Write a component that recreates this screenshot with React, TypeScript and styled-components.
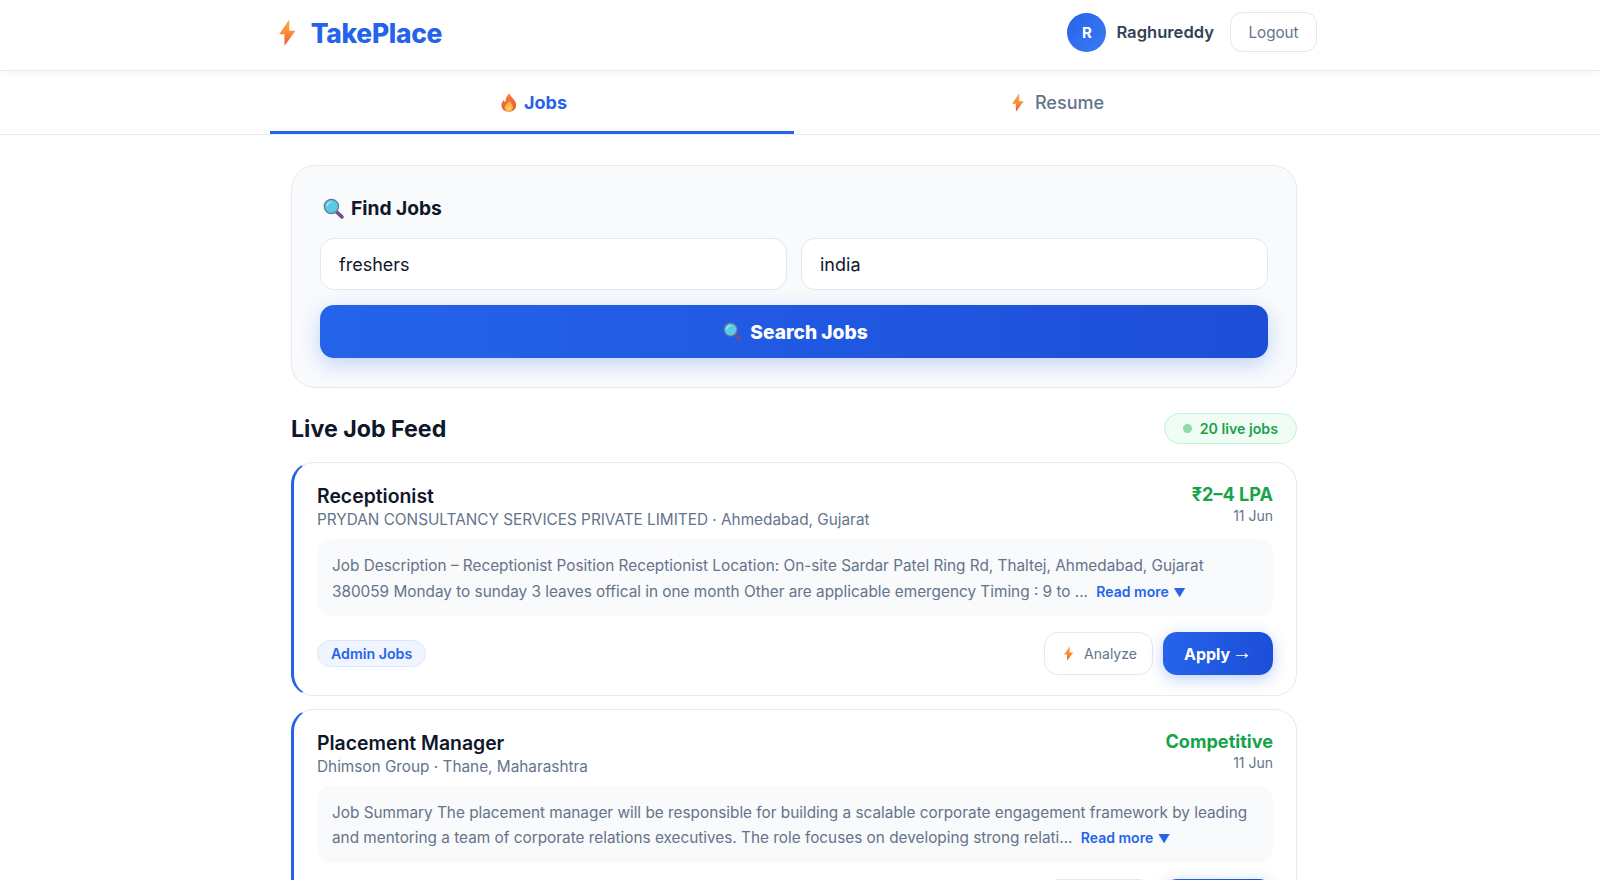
import React from 'react'
import styled, { createGlobalStyle } from 'styled-components'

const GlobalStyle = createGlobalStyle`
  html, body {
    margin: 0;
    height: 880px;
    overflow: hidden;
    background: #ffffff;
  }
  * {
    box-sizing: border-box;
  }
`

// the reference keeps 12px free on the right for its scrollbar
const Page = styled.div`
  width: 1600px;
  font-family: 'Inter', 'Liberation Sans', sans-serif;
  color: #0f172a;
`

const NavBar = styled.header`
  height: 71px;
  padding-right: 12px;
  border-bottom: 1px solid #e6ecf4;
  box-shadow: 0 2px 8px rgba(15, 23, 42, 0.05);
  & .inner {
    width: 1048px;
    height: 100%;
    margin: 0 auto;
    padding: 0 1px 5px 9px;
    display: flex;
    align-items: center;
    justify-content: space-between;
  }
`

const Logo = styled.div`
  display: flex;
  align-items: center;
  gap: 15px;
  font-size: 26.4px;
  font-weight: 800;
  letter-spacing: -0.3px;
  color: #2563eb;
`

const UserBox = styled.div`
  display: flex;
  align-items: center;
  margin-top: -1px;
  & .avatar {
    width: 39px;
    height: 39px;
    border-radius: 50%;
    background: linear-gradient(135deg, #2563eb, #3b7bf0);
    color: #fff;
    font-size: 15px;
    font-weight: 700;
    display: flex;
    align-items: center;
    justify-content: center;
  }
  & .name {
    margin-left: 10px;
    font-size: 16.6px;
    font-weight: 600;
    color: #334155;
  }
`

const LogoutButton = styled.button`
  margin-left: 16px;
  width: 87px;
  height: 40px;
  background: #fff;
  border: 1px solid #e2e8f0;
  border-radius: 12px;
  font-family: inherit;
  font-size: 15.2px;
  font-weight: 400;
  color: #64748b;
`

const TabBar = styled.nav`
  height: 64px;
  padding-right: 12px;
  border-bottom: 1px solid #e6ecf4;
  & .inner {
    width: 1048px;
    height: 63px;
    margin: 0 auto;
    display: flex;
  }
`

const Tab = styled.div<{ $active?: boolean }>`
  flex: 1;
  height: 63px;
  padding-top: 3px;
  display: flex;
  align-items: center;
  justify-content: center;
  gap: 7px;
  font-size: 18px;
  font-weight: ${(p) => (p.$active ? 700 : 500)};
  color: ${(p) => (p.$active ? '#2563eb' : '#64748b')};
  border-bottom: 3px solid ${(p) => (p.$active ? '#2563eb' : 'transparent')};
`

const EmojiSlot = styled.span<{ $width: number; $pushRight?: number }>`
  width: ${(p) => p.$width}px;
  padding-left: ${(p) => p.$pushRight ?? 0}px;
  display: flex;
  align-items: center;
  justify-content: center;
  flex-shrink: 0;
`

const Main = styled.main`
  width: 1006px;
  margin: 0 auto;
  padding-top: 30px;
  position: relative;
  left: -6px;
`

const SearchPanel = styled.section`
  height: 223px;
  padding: 28px 28px 0;
  background: #f8fafc;
  border: 1px solid #e5eaf1;
  border-radius: 24px;
  & .heading {
    display: flex;
    align-items: center;
    gap: 5px;
    height: 28px;
    font-size: 19.2px;
    font-weight: 700;
  }
  & .fields {
    margin-top: 16px;
    display: grid;
    grid-template-columns: 1fr 1fr;
    gap: 14px;
  }
`

const Field = styled.input`
  width: 100%;
  height: 52px;
  padding: 0 18px;
  background: #fff;
  border: 1px solid #e2e8f0;
  border-radius: 14px;
  font-family: inherit;
  font-size: 18px;
  color: #0f172a;
`

const SearchButton = styled.button`
  width: 100%;
  height: 53px;
  margin-top: 15px;
  border: none;
  border-radius: 14px;
  background: linear-gradient(90deg, #2563eb, #1d4ed8);
  box-shadow: 0 6px 20px rgba(37, 99, 235, 0.25);
  font-family: inherit;
  font-size: 19.2px;
  font-weight: 800;
  color: #fff;
  display: flex;
  align-items: center;
  justify-content: center;
  gap: 6px;
`

const FeedHead = styled.div`
  margin-top: 24px;
  height: 32px;
  display: flex;
  align-items: center;
  justify-content: space-between;
  & h2 {
    margin: 0;
    padding-top: 1px;
    font-size: 23.2px;
    font-weight: 700;
  }
`

const LiveBadge = styled.div`
  height: 31px;
  padding: 0 18px;
  display: flex;
  align-items: center;
  gap: 8px;
  border: 1px solid #bbf7d0;
  border-radius: 16px;
  background: #f0fdf4;
  font-size: 14.2px;
  font-weight: 600;
  color: #16a34a;
  & i {
    width: 9px;
    height: 9px;
    border-radius: 50%;
    background: #8ed9ad;
  }
`

const JobCard = styled.article`
  margin-top: 18px;
  padding: 20px 23px 19.5px 23px;
  background: #fff;
  border: 1px solid #e5eaf1;
  border-left: 3px solid #2563eb;
  border-radius: 22px;
  & + & {
    margin-top: 13px;
  }
`

const JobHead = styled.div`
  display: flex;
  justify-content: space-between;
  & h3 {
    margin: 0;
    padding-top: 1px;
    font-size: 19.4px;
    font-weight: 600;
    line-height: 24px;
  }
  & .company {
    font-size: 15.33px;
    line-height: 24px;
    color: #64748b;
  }
  & .right {
    text-align: right;
  }
  & .salary {
    margin-bottom: 1px;
    font-size: 18.1px;
    font-weight: 700;
    line-height: 23px;
    color: #16a34a;
  }
  & .date {
    font-size: 14px;
    line-height: 18px;
    color: #64748b;
  }
`

const Description = styled.p`
  margin: 7px 0 0;
  padding: 14px 15px 11px;
  background: #f8fafc;
  border-radius: 14px;
  font-size: 15.33px;
  line-height: 25.6px;
  color: #667389;
  & a {
    margin-left: 4px;
    font-size: 14px;
    font-weight: 600;
    color: #2563eb;
  }
  & a span {
    margin-left: 1px;
    font-size: 12px;
  }
`

const JobFoot = styled.div`
  margin-top: 16px;
  display: flex;
  align-items: center;
  justify-content: space-between;
  & .actions {
    display: flex;
    gap: 10px;
  }
`

const Tag = styled.span`
  height: 27px;
  padding: 0 13px;
  display: flex;
  align-items: center;
  border: 1px solid #dbe6fb;
  border-radius: 14px;
  background: #eff4ff;
  font-size: 14.2px;
  font-weight: 600;
  color: #2563eb;
`

const AnalyzeButton = styled.button`
  width: 109px;
  height: 43px;
  background: #fff;
  border: 1px solid #e2e8f0;
  border-radius: 14px;
  font-family: inherit;
  font-size: 14px;
  font-weight: 400;
  color: #64748b;
  display: flex;
  align-items: center;
  justify-content: center;
  gap: 6px;
`

const ApplyButton = styled.button`
  width: 110px;
  height: 43px;
  border: none;
  border-radius: 14px;
  background: linear-gradient(90deg, #2563eb, #1d4ed8);
  box-shadow: 0 4px 16px rgba(37, 99, 235, 0.3);
  font-family: inherit;
  font-size: 16px;
  font-weight: 700;
  color: #fff;
  & span {
    margin-left: -2px;
    font-family: 'Liberation Sans', sans-serif;
    font-size: 20px;
    font-weight: 400;
    line-height: 16px;
    vertical-align: 1px;
  }
`

const Bolt = ({ size, id }: { size: number; id: string }) => (
  <svg width={size * 0.62} height={size} viewBox="0 0 15 24" aria-hidden="true">
    <defs>
      <linearGradient id={id} x1="0.5" y1="0" x2="0.5" y2="1">
        <stop offset="0" stopColor="#fdab45" />
        <stop offset="0.55" stopColor="#fb8a35" />
        <stop offset="1" stopColor="#ef4b46" />
      </linearGradient>
    </defs>
    <path d="M9.2 0.3 L0.2 13.6 L4.8 13.6 L5 23.8 L14.8 10.4 L9.2 10.4 Z" fill={`url(#${id})`} />
  </svg>
)

const Flame = ({ size }: { size: number }) => (
  <svg width={size * 0.82} height={size} viewBox="0 0 14 17" aria-hidden="true">
    <defs>
      <linearGradient id="flameOuter" x1="0.5" y1="0" x2="0.5" y2="1">
        <stop offset="0" stopColor="#f5803a" />
        <stop offset="1" stopColor="#e9562f" />
      </linearGradient>
      <radialGradient id="flameInner" cx="0.5" cy="0.7" r="0.6">
        <stop offset="0" stopColor="#fdd556" />
        <stop offset="1" stopColor="#fb9a3e" />
      </radialGradient>
    </defs>
    <path
      d="M7.6 0.2 C8 2.4 9.8 3.6 11.4 5.6 C13 7.6 13.8 9.4 13.6 11.4 C13.2 14.8 10.6 16.8 7 16.8 C3.4 16.8 0.6 14.6 0.4 11.2 C0.3 9.2 1.1 7.6 2.4 6.2 C2.7 7.2 3.2 7.8 4 8.1 C4 5.2 5.2 2.4 7.6 0.2 Z"
      fill="url(#flameOuter)"
    />
    <path
      d="M7.4 6.6 C8 8.4 10.6 9.6 10.8 12.4 C11 14.8 9.2 16.6 7 16.6 C4.8 16.6 3 14.9 3.1 12.8 C3.2 10.6 6.2 9.2 7.4 6.6 Z"
      fill="url(#flameInner)"
    />
  </svg>
)

const Lens = ({ size }: { size: number }) => (
  <svg width={size} height={size} viewBox="0 0 20 20" aria-hidden="true">
    <path d="M12.6 12.8 L18 18" stroke="#7b4a86" strokeWidth="3.4" strokeLinecap="round" />
    <circle cx="8" cy="8" r="7.4" fill="#5b7f99" />
    <circle cx="8" cy="8" r="6.1" fill="#5cc9e2" />
    <path d="M4 7.2 C4.4 5.4 5.8 4.2 7.4 4" stroke="#a5e6f2" strokeWidth="1.3" fill="none" strokeLinecap="round" />
  </svg>
)

type Job = {
  title: string
  company: string
  salary: string
  date: string
  text: string
  tag: string
}

const jobs: Job[] = [
  {
    title: 'Receptionist',
    company: 'PRYDAN CONSULTANCY SERVICES PRIVATE LIMITED · Ahmedabad, Gujarat',
    salary: '₹2–4 LPA',
    date: '11 Jun',
    text: 'Job Description – Receptionist Position Receptionist Location: On-site Sardar Patel Ring Rd, Thaltej, Ahmedabad, Gujarat 380059 Monday to sunday 3 leaves offical in one month Other are applicable emergency Timing : 9 to ...',
    tag: 'Admin Jobs',
  },
  {
    title: 'Placement Manager',
    company: 'Dhimson Group · Thane, Maharashtra',
    salary: 'Competitive',
    date: '11 Jun',
    text: 'Job Summary The placement manager will be responsible for building a scalable corporate engagement framework by leading and mentoring a team of corporate relations executives. The role focuses on developing strong relati...',
    tag: 'HR Jobs',
  },
]

export default function App() {
  return (
    <Page>
      <GlobalStyle />
      <NavBar>
        <div className="inner">
          <Logo>
            <Bolt size={27} id="boltLogo" />
            TakePlace
          </Logo>
          <UserBox>
            <div className="avatar">R</div>
            <div className="name">Raghureddy</div>
            <LogoutButton>Logout</LogoutButton>
          </UserBox>
        </div>
      </NavBar>
      <TabBar>
        <div className="inner">
          <Tab $active>
            <EmojiSlot $width={20} $pushRight={3}>
              <Flame size={19} />
            </EmojiSlot>
            Jobs
          </Tab>
          <Tab>
            <EmojiSlot $width={20}>
              <Bolt size={19} id="boltTab" />
            </EmojiSlot>
            Resume
          </Tab>
        </div>
      </TabBar>
      <Main>
        <SearchPanel>
          <div className="heading">
            <EmojiSlot $width={26}>
              <Lens size={21} />
            </EmojiSlot>
            Find Jobs
          </div>
          <div className="fields">
            <Field defaultValue="freshers" />
            <Field defaultValue="india" />
          </div>
          <SearchButton>
            <EmojiSlot $width={24}>
              <Lens size={19} />
            </EmojiSlot>
            Search Jobs
          </SearchButton>
        </SearchPanel>
        <FeedHead>
          <h2>Live Job Feed</h2>
          <LiveBadge>
            <i />
            20 live jobs
          </LiveBadge>
        </FeedHead>
        {jobs.map((job, i) => (
          <JobCard key={job.title}>
            <JobHead>
              <div>
                <h3>{job.title}</h3>
                <div className="company">{job.company}</div>
              </div>
              <div className="right">
                <div className="salary">{job.salary}</div>
                <div className="date">{job.date}</div>
              </div>
            </JobHead>
            <Description>
              {job.text}{' '}
              <a>
                Read more <span>▼</span>
              </a>
            </Description>
            <JobFoot>
              <Tag>{job.tag}</Tag>
              <div className="actions">
                <AnalyzeButton>
                  <EmojiSlot $width={18}>
                    <Bolt size={15} id={`boltJob${i}`} />
                  </EmojiSlot>
                  Analyze
                </AnalyzeButton>
                <ApplyButton>
                  Apply <span>→</span>
                </ApplyButton>
              </div>
            </JobFoot>
          </JobCard>
        ))}
      </Main>
    </Page>
  )
}
